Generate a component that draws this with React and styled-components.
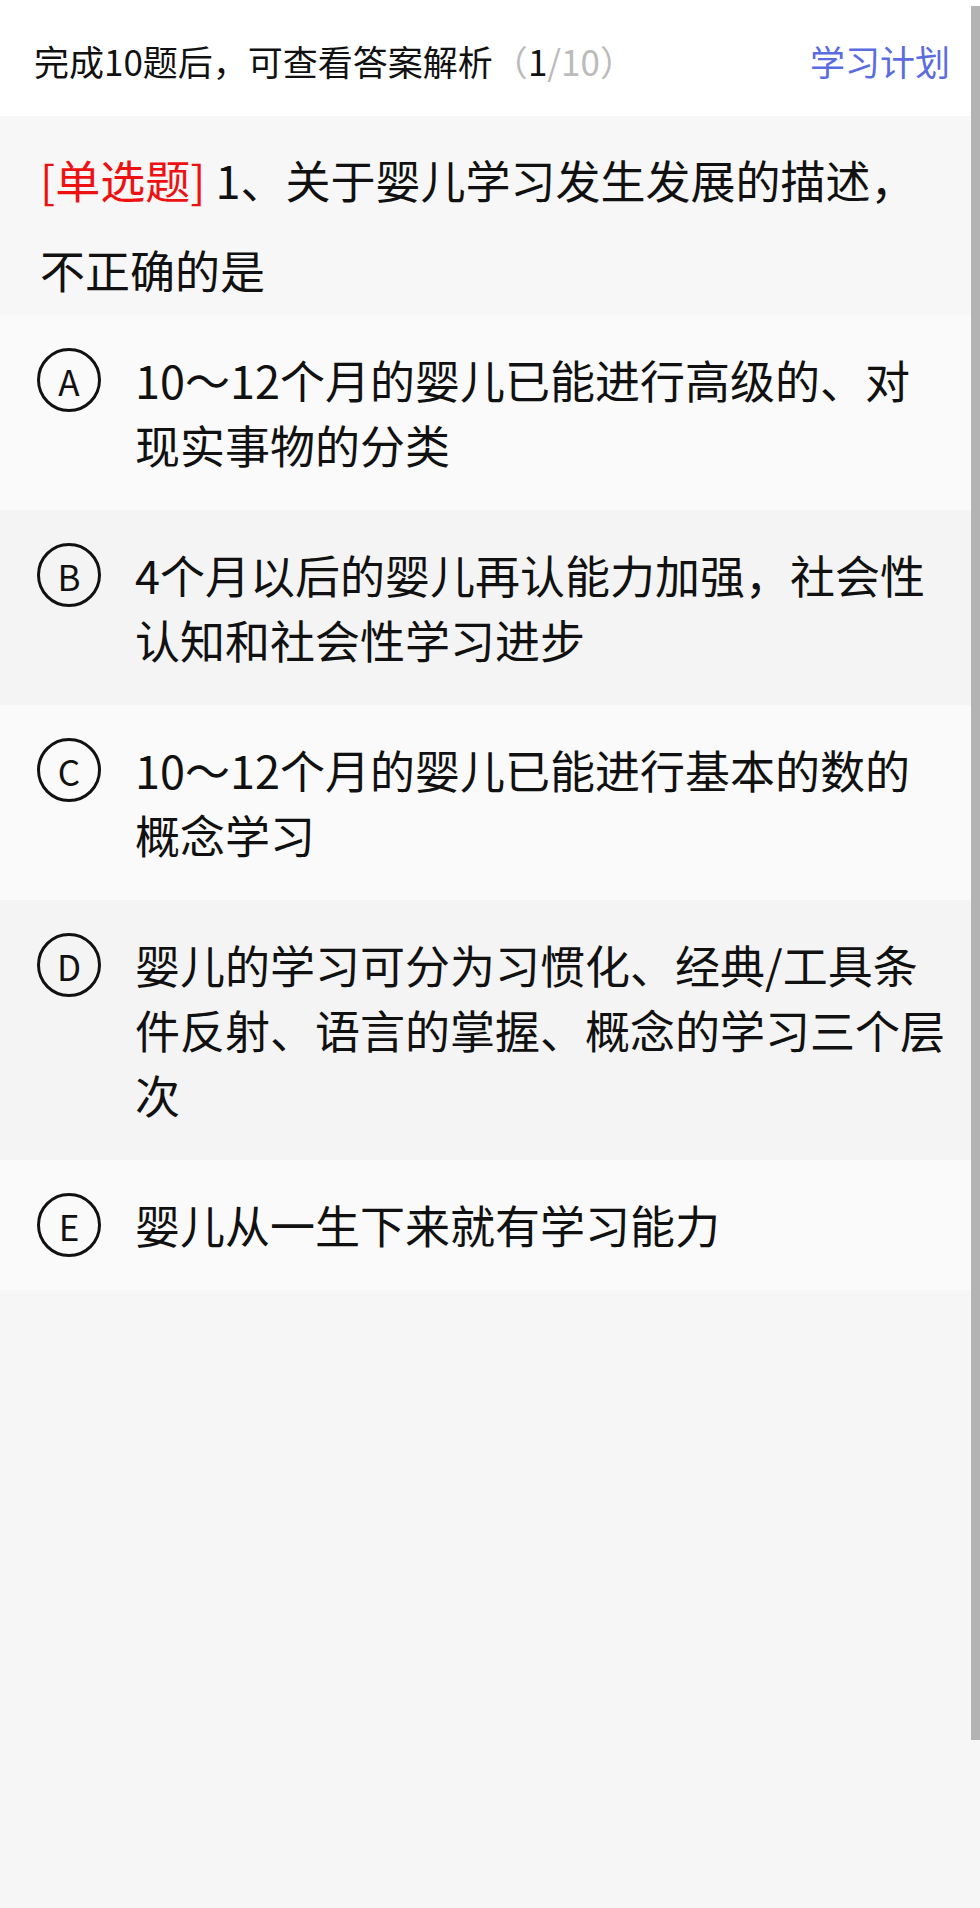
import React from "react";
import styled, { createGlobalStyle } from "styled-components";

const GlobalStyle = createGlobalStyle`
  html, body {
    margin: 0;
    padding: 0;
    background: #f6f6f6;
    overflow: hidden;
  }
  body {
    font-family: "Noto Sans CJK SC", "Noto Sans", sans-serif;
    color: #111;
  }
  * { box-sizing: border-box; }
`;

const Page = styled.div`
  width: 980px;
  min-height: 1908px;
  background: #f6f6f6;
  position: relative;
`;

const Header = styled.header`
  height: 116px;
  background: #ffffff;
  display: flex;
  align-items: center;
  justify-content: space-between;
  padding: 4px 30px 0 34px;
  font-size: 35px;
  line-height: 1;
`;

const Progress = styled.div`
  color: #111;
  white-space: nowrap;
`;

const Muted = styled.span`
  color: #bbbbbb;
`;

const Current = styled.span`
  color: #111;
`;

const PlanLink = styled.a`
  color: #5b6be0;
  text-decoration: none;
  white-space: nowrap;
`;

const Question = styled.div`
  background: #f7f7f7;
  padding: 19px 40px 0 40px;
  font-size: 45px;
  line-height: 90px;
  color: #111;
`;

const TypeTag = styled.span`
  color: #ee1111;
  margin-right: 10px;
`;

const OptionList = styled.div`
  display: flex;
  flex-direction: column;
`;

const OptionRow = styled.div`
  display: flex;
  align-items: flex-start;
  gap: 34px;
  padding: 32px 30px 33px 37px;
  background: ${(p) => (p.$alt ? "#f4f4f4" : "#fafafa")};
`;

const Letter = styled.div`
  flex-shrink: 0;
  width: 64px;
  height: 64px;
  margin-top: 1px;
  border: 3px solid #111;
  border-radius: 50%;
  display: flex;
  align-items: center;
  justify-content: center;
  font-size: 35px;
  line-height: 1;
  color: #111;
`;

const OptionText = styled.div`
  flex: 1;
  font-size: 45px;
  line-height: 65px;
  color: #111;
`;

const ScrollThumb = styled.div`
  position: fixed;
  top: 6px;
  right: 0;
  width: 9px;
  height: 1734px;
  background: #b3b3b3;
`;

const options = [
  { key: "A", text: "10～12个月的婴儿已能进行高级的、对现实事物的分类" },
  { key: "B", text: "4个月以后的婴儿再认能力加强，社会性认知和社会性学习进步" },
  { key: "C", text: "10～12个月的婴儿已能进行基本的数的概念学习" },
  { key: "D", text: "婴儿的学习可分为习惯化、经典/工具条件反射、语言的掌握、概念的学习三个层次" },
  { key: "E", text: "婴儿从一生下来就有学习能力" },
];

export default function App() {
  return (
    <>
      <GlobalStyle />
      <Page>
        <Header>
          <Progress>
            完成10题后，可查看答案解析
            <Muted>（</Muted>
            <Current>1</Current>
            <Muted>/10）</Muted>
          </Progress>
          <PlanLink href="#">学习计划</PlanLink>
        </Header>
        <Question>
          <TypeTag>[单选题]</TypeTag>1、关于婴儿学习发生发展的描述，不正确的是
        </Question>
        <OptionList>
          {options.map((o, i) => (
            <OptionRow key={o.key} $alt={i % 2 === 1}>
              <Letter>{o.key}</Letter>
              <OptionText>{o.text}</OptionText>
            </OptionRow>
          ))}
        </OptionList>
        <ScrollThumb />
      </Page>
    </>
  );
}
